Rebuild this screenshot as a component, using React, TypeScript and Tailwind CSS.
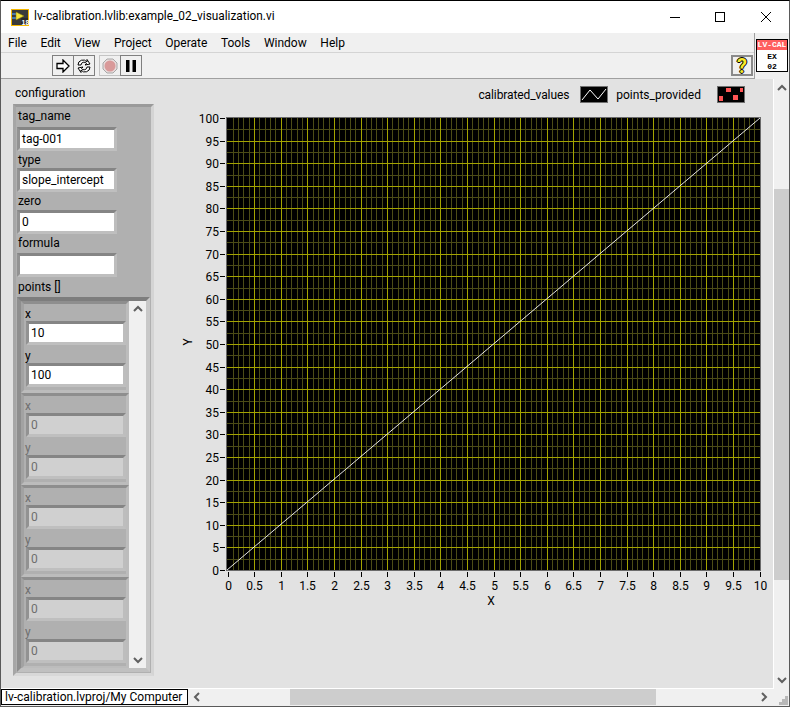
const menus = ["File", "Edit", "View", "Project", "Operate", "Tools", "Window", "Help"];
const yLabels = Array.from({ length: 21 }, (_, i) => i * 5);
const xLabels = Array.from({ length: 21 }, (_, i) => i * 0.5);

const PX0 = 227.5;
const PX = 26.6;
const PY0 = 570;
const PY = 22.6;

function Field({ value, disabled }: { value: string; disabled?: boolean }) {
  return (
    <div className="h-6 w-[100px] border-[3px] border-t-[#858585] border-l-[#929292] border-r-[#bdbdbd] border-b-[#bfbfbf]">
      <div
        className={
          disabled
            ? "h-full bg-[#d0d0d0] pl-0.5 text-[#6e6e6e] leading-[18px]"
            : "h-full bg-white pl-0.5 text-black leading-[18px]"
        }
      >
        {value}
      </div>
    </div>
  );
}

function PointRow({ x, y, disabled }: { x: string; y: string; disabled?: boolean }) {
  return (
    <div className="h-[92px] shrink-0 border-[3px] border-t-[#8e8e8e] border-l-[#a2a2a2] border-r-[#bcbcbc] border-b-[#bcbcbc] bg-[#b0b0b0] pt-[2px]">
      <div className={disabled ? "h-[15px] pl-px leading-[17px] text-[#6e6e6e]" : "h-[15px] pl-px leading-[17px]"}>x</div>
      <div className="ml-0.5">
        <Field value={x} disabled={disabled} />
      </div>
      <div className={disabled ? "mt-[3px] h-[15px] pl-px leading-[17px] text-[#6e6e6e]" : "mt-[3px] h-[15px] pl-px leading-[17px]"}>y</div>
      <div className="ml-0.5">
        <Field value={y} disabled={disabled} />
      </div>
    </div>
  );
}

function Chevron({ dir }: { dir: "up" | "down" | "left" | "right" }) {
  const points = {
    up: "1,6 5,2 9,6",
    down: "1,2 5,6 9,2",
    left: "6,1 2,5 6,9",
    right: "2,1 6,5 2,9",
  }[dir];
  const box = dir === "up" || dir === "down" ? "0 0 10 8" : "0 0 8 10";
  const size = dir === "up" || dir === "down" ? "h-2 w-2.5" : "h-2.5 w-2";
  return (
    <svg viewBox={box} className={size}>
      <polyline points={points} fill="none" stroke="#606060" strokeWidth="2" />
    </svg>
  );
}

function WindowIcon() {
  return (
    <svg viewBox="0 0 18 17" className="h-[17px] w-[18px]">
      <rect x="0.5" y="0.5" width="17" height="16" fill="#3a3a3a" stroke="#f5b800" />
      <path d="M1 5h5M1 9h5" stroke="#4a8fd8" strokeWidth="1.5" />
      <path d="M5 3l8 4-8 4z" fill="#f2e33c" stroke="#8a7a00" strokeWidth="0.5" />
      <rect x="10" y="9" width="7" height="7" fill="#2a2a2a" />
      <text x="10.5" y="15.5" fontSize="7" fontWeight="700" fill="#ffffff" fontFamily="Liberation Sans, sans-serif">
        18
      </text>
    </svg>
  );
}

function TitleBar() {
  return (
    <div className="flex h-8 shrink-0 items-center bg-white pl-[10px]">
      <WindowIcon />
      <span className="ml-[5px] text-[11.85px] text-black">lv-calibration.lvlib:example_02_visualization.vi</span>
      <div className="ml-auto flex items-center">
        <svg viewBox="0 0 10 10" className="h-2.5 w-2.5">
          <path d="M0 5.5h10" stroke="#000" />
        </svg>
        <svg viewBox="0 0 10 10" className="ml-[35px] h-2.5 w-2.5">
          <rect x="0.5" y="0.5" width="9" height="9" fill="none" stroke="#000" />
        </svg>
        <svg viewBox="0 0 10 10" className="mr-[18px] ml-[36px] h-2.5 w-2.5">
          <path d="M0 0l10 10M10 0L0 10" stroke="#000" />
        </svg>
      </div>
    </div>
  );
}

function ToolButton({ children, light, className }: { children: React.ReactNode; light?: boolean; className?: string }) {
  return (
    <div
      className={`flex h-[21px] w-[22px] items-center justify-center border ${
        light ? "border-[#c4c4c4]" : "border-[#7f7f7f]"
      } ${className ?? ""}`}
    >
      {children}
    </div>
  );
}

function Toolbar() {
  return (
    <div className="relative shrink-0 bg-[#f0f0f0]">
      <div className="flex h-5 items-center gap-[13.6px] border-b border-[#d4d4d4] pl-[7px] text-[12px]">
        {menus.map((m) => (
          <span key={m}>{m}</span>
        ))}
      </div>
      <div className="flex h-[26px] items-center border-b border-[#a0a0a0] pl-[51px]">
        <ToolButton>
          <svg viewBox="0 0 16 14" className="h-3.5 w-4">
            <path d="M2 4.5h6V1l6 6-6 6V9.5H2z" fill="#fff" stroke="#000" strokeWidth="1.3" />
          </svg>
        </ToolButton>
        <ToolButton className="-ml-px">
          <svg viewBox="0 0 18 16" className="h-4 w-[18px]">
            <path d="M3 7a5 5 0 0 1 9-3V1.5l3 4.5-5 1 1.5-1.5A3 3 0 0 0 6 7z" fill="#fff" stroke="#000" strokeWidth="1" />
            <path d="M15 9a5 5 0 0 1-9 3v2.5L3 10l5-1-1.5 1.5A3 3 0 0 0 12 9z" fill="#fff" stroke="#000" strokeWidth="1" />
          </svg>
        </ToolButton>
        <ToolButton light className="ml-[4px]">
          <svg viewBox="0 0 16 16" className="h-4 w-4">
            <path d="M5 1h6l4 4v6l-4 4H5l-4-4V5z" fill="#e8dcdc" stroke="#a8a8a8" />
            <circle cx="8" cy="8" r="5.5" fill="#d99a9a" />
          </svg>
        </ToolButton>
        <ToolButton className="-ml-px">
          <svg viewBox="0 0 12 12" className="h-3 w-3">
            <rect x="1" y="0" width="3.5" height="12" fill="#000" />
            <rect x="7.5" y="0" width="3.5" height="12" fill="#000" />
          </svg>
        </ToolButton>
        <div className="ml-auto mr-[36px] flex h-[21px] w-[22px] items-center justify-center border-2 border-[#8a8a8a]">
          <span className="text-[20px] leading-none font-bold text-[#f7e82a] [text-shadow:1px_0_#000,-1px_0_#000,0_1px_#000,0_-1px_#000]">?</span>
        </div>
      </div>
      {/* VI icon sits over the menu and tool bars */}
      <div className="absolute top-0 right-0 h-[46px] w-[35px] border-l border-[#a0a0a0] bg-[#f0f0f0]">
        <div className="mt-[6px] ml-[1px] h-[33px] w-8 border border-black bg-white font-['Liberation_Mono',monospace] text-[8px] leading-[10px] font-bold">
          <div className="h-2.5 bg-[#ff5f5f] text-center text-white">LV-CAL</div>
          <div className="mt-[2px] text-center text-black">EX</div>
          <div className="mt-0 text-center text-black">02</div>
        </div>
      </div>
    </div>
  );
}

function ConfigCluster() {
  const label = "h-4 pl-0.5 leading-4";
  return (
    <div className="h-[572px] border-[3px] border-t-[#9a9a9a] border-l-[#a6a6a6] border-r-[#d4d4d4] border-b-[#d8d8d8] bg-[#b0b0b0] text-black">
      <div className={`mt-[1px] ${label}`}>tag_name</div>
      <div className="mt-[3px] ml-px">
        <Field value="tag-001" />
      </div>
      <div className={`mt-[1px] ${label}`}>type</div>
      <div className="ml-px">
        <Field value="slope_intercept" />
      </div>
      <div className={`mt-[1px] ${label}`}>zero</div>
      <div className="mt-[1px] ml-px">
        <Field value="0" />
      </div>
      <div className={`mt-[1px] ${label}`}>formula</div>
      <div className="mt-[2px] ml-px">
        <Field value="" />
      </div>
      <div className={`mt-[2px] ${label}`}>points []</div>
      <div className="mt-[2px] ml-px flex h-[375px] w-[133px] border-4 border-t-[#7d7d7d] border-l-[#8e8e8e] border-r-[#c8c8c8] border-b-[#c0c0c0] bg-[#a8a8a8]">
        <div className="flex h-full w-[108px] flex-col overflow-hidden">
          <PointRow x="10" y="100" />
          <PointRow x="0" y="0" disabled />
          <PointRow x="0" y="0" disabled />
          <PointRow x="0" y="0" disabled />
        </div>
        <div className="flex flex-1 flex-col items-center justify-between bg-[#f0f0f0] py-1">
          <Chevron dir="up" />
          <Chevron dir="down" />
        </div>
      </div>
    </div>
  );
}

function Plot() {
  const minorX = Array.from({ length: 101 }, (_, i) => PX0 + (i * PX) / 5).filter((_, i) => i % 5 !== 0);
  const minorY = Array.from({ length: 20 }, (_, i) => PY0 - PY / 2 - i * PY);
  const labelClass = "fill-black text-[12px]";
  return (
    <svg viewBox="170 103 602 510" className="h-[510px] w-[602px]">
      <rect x="226.5" y="117.5" width="534" height="453" fill="#000" stroke="#6a6a6a" />
      {minorX.map((x) => (
        <path key={x} d={`M${Math.round(x) + 0.5} 118V570`} stroke="#4c4c16" />
      ))}
      {minorY.map((y) => (
        <path key={y} d={`M227 ${Math.round(y) + 0.5}H760`} stroke="#4c4c16" />
      ))}
      {xLabels.slice(1, -1).map((_, i) => (
        <path key={i} d={`M${Math.round(PX0 + (i + 1) * PX) + 0.5} 118V570`} stroke="#a4a400" />
      ))}
      {yLabels.slice(1, -1).map((_, i) => (
        <path key={i} d={`M227 ${Math.round(PY0 - (i + 1) * PY) + 0.5}H760`} stroke="#a4a400" />
      ))}
      <path d="M227 570L760 118" stroke="#fff" strokeWidth="0.9" />
      {yLabels.map((v, i) => {
        const y = Math.round(PY0 - i * PY) + 0.5;
        return (
          <g key={v}>
            <path d={`M220 ${y}H225`} stroke="#000" />
            <text x="219" y={y + 4} textAnchor="end" className={labelClass}>
              {v}
            </text>
          </g>
        );
      })}
      {xLabels.map((v, i) => {
        const x = Math.round(PX0 + i * PX) + 0.5;
        return (
          <g key={v}>
            <path d={`M${x} 572V577`} stroke="#000" />
            <text x={x} y="590" textAnchor="middle" className={labelClass}>
              {v}
            </text>
          </g>
        );
      })}
      <text x="491" y="605" textAnchor="middle" className={labelClass}>
        X
      </text>
      <text transform="translate(192 342) rotate(-90)" textAnchor="middle" className={labelClass}>
        Y
      </text>
    </svg>
  );
}

function Legend() {
  return (
    <div className="mr-[27px] flex h-[17px] items-center justify-end text-black">
      <span className="tracking-[-0.1px]">calibrated_values</span>
      <svg viewBox="0 0 28 17" className="ml-[11px] h-[17px] w-7">
        <rect x="0.5" y="0.5" width="27" height="16" fill="#000" stroke="#707070" />
        <path d="M2 14L10 4l8 9 8-10" fill="none" stroke="#fff" />
      </svg>
      <span className="ml-2">points_provided</span>
      <svg viewBox="0 0 28 17" className="ml-4 h-[17px] w-7">
        <rect x="0.5" y="0.5" width="27" height="16" fill="#000" stroke="#707070" />
        <rect x="9" y="2" width="5" height="4" fill="#f55" />
        <rect x="23" y="2" width="3" height="4" fill="#f55" />
        <rect x="2" y="10" width="4" height="5" fill="#f55" />
        <rect x="16" y="9" width="5" height="5" fill="#f55" />
      </svg>
    </div>
  );
}

export default function App() {
  return (
    <div className="flex h-[707px] w-[790px] flex-col overflow-hidden border border-[#5a5a5a] border-t-black bg-[#f0f0f0] font-['Roboto',sans-serif] text-[12px] text-black">
      <TitleBar />
      <Toolbar />
      <div className="flex min-h-0 flex-1">
        <div className="flex flex-1 flex-col">
          <div className="flex h-[610px] border-r border-b border-white bg-[#e2e2e2]">
            <div className="ml-3 w-[141px] shrink-0">
              <div className="h-[25px] pt-1.5 pl-0.5 leading-4">configuration</div>
              <ConfigCluster />
            </div>
            <div className="ml-4 w-[602px]">
              <div className="pt-[7px]">
                <Legend />
              </div>
              <Plot />
            </div>
          </div>
          <div className="flex h-4 items-center">
            <div className="flex h-4 w-[187px] items-center border border-black bg-white pl-[3px] leading-none whitespace-nowrap">
              lv-calibration.lvproj/My Computer
            </div>
            <div className="ml-[5px]">
              <Chevron dir="left" />
            </div>
            <div className="ml-[89px] h-4 w-[366px] bg-[#cdcdcd]" />
            <div className="ml-auto mr-1.5">
              <Chevron dir="right" />
            </div>
          </div>
        </div>
        <div className="flex w-[15px] shrink-0 flex-col items-center">
          <div className="mt-[5px]">
            <Chevron dir="up" />
          </div>
          <div className="mt-[97px] h-[391px] w-full bg-[#cdcdcd]" />
          <div className="mt-[96px]">
            <Chevron dir="down" />
          </div>
          <svg viewBox="0 0 9 9" className="mt-[12px] ml-1 h-[9px] w-[9px]">
            <path d="M6 0h3v3H6zM3 3h3v3H3zM6 3h3v3H6zM0 6h3v3H0zM3 6h3v3H3zM6 6h3v3H6z" fill="#b8b8b8" />
          </svg>
        </div>
      </div>
    </div>
  );
}
